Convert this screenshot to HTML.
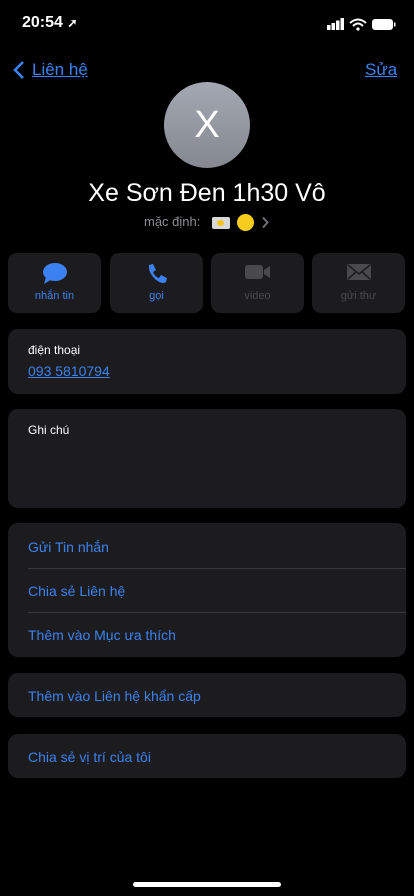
<!DOCTYPE html>
<html><head><meta charset="utf-8"><style>
*{margin:0;padding:0;box-sizing:border-box}
body{width:414px;height:896px;background:#000;color:#fff;font-family:"Liberation Sans",sans-serif;position:relative;overflow:hidden}
.a{position:absolute}
.card{position:absolute;left:8px;width:398px;background:#1c1c1e;border-radius:10px}
.blue{color:#3b82f0}
.btn{position:absolute;top:253px;width:93px;height:60px;background:#1c1c1e;border-radius:9px;text-align:center;font-size:11px}
.btn span{position:absolute;left:0;right:0;top:37px}
.btn svg{position:absolute;left:50%;transform:translateX(-50%);top:10px}
.row{position:absolute;left:20px;font-size:14px;color:#3b82f0}
.sep{position:absolute;left:20px;right:0;height:1px;background:#38383a}
</style></head><body>
<div class="a" style="left:22px;top:14px;font-size:16px;font-weight:bold">20:54 <span style="font-size:12px">➚</span></div>
<svg class="a" style="left:327px;top:18px" width="70" height="14">
<rect x="0" y="7" width="3.5" height="5" fill="#fff"/><rect x="4.5" y="5" width="3.5" height="7" fill="#fff"/><rect x="9" y="2.5" width="3.5" height="9.5" fill="#fff"/><rect x="13.5" y="0" width="3.5" height="12" fill="#fff"/>
<path d="M23 5 Q31 -2 39 5 M26 8 Q31 3 36 8" stroke="#fff" stroke-width="2" fill="none"/><circle cx="31" cy="11" r="1.6" fill="#fff"/>
<rect x="45" y="1" width="21" height="11" rx="3" fill="#fff"/><rect x="67" y="4.5" width="1.5" height="4" fill="#fff"/>
</svg>
<svg class="a" style="left:12px;top:60px" width="14" height="20"><path d="M11 2 L3 10 L11 18" stroke="#3b82f0" stroke-width="2.6" fill="none"/></svg>
<div class="a blue" style="left:32px;top:60px;font-size:17px;text-decoration:underline">Liên hệ</div>
<div class="a blue" style="left:365px;top:60px;font-size:17px;text-decoration:underline">Sửa</div>
<div class="a" style="left:164px;top:82px;width:86px;height:86px;border-radius:50%;background:linear-gradient(#a4a8b2,#858891);text-align:center;line-height:86px;font-size:38px">X</div>
<div class="a" style="left:0;width:414px;top:179px;text-align:center;font-size:25px">Xe Sơn Đen 1h30 Vô</div>
<div class="a" style="left:144px;top:214px;font-size:13px;color:#8e8e93">mặc định:</div>
<div class="a" style="left:212px;top:217px;width:18px;height:12px;background:#d8d8d8;border-radius:2px"><div style="margin:3px 5px;width:7px;height:6px;background:#f0c419;border-radius:50%"></div></div>
<div class="a" style="left:237px;top:214px;width:17px;height:17px;border-radius:50%;background:#f7cc1c"></div>
<svg class="a" style="left:261px;top:216px" width="8" height="13"><path d="M2 1.5 L6.5 6.5 L2 11.5" stroke="#6e6e73" stroke-width="2" fill="none"/></svg>

<div class="btn blue" style="left:8px"><svg width="26" height="22" viewBox="0 0 26 22"><ellipse cx="13" cy="9" rx="12" ry="9" fill="#3b82f0"/><path d="M4 14 L2 21 L10 16Z" fill="#3b82f0"/></svg><span>nhắn tin</span></div>
<div class="btn blue" style="left:110px"><svg width="22" height="22" viewBox="0 0 22 22"><path d="M3 2 L7 1 L10 7 L7 9 Q9 14 13 15 L15 12 L21 15 L20 19 Q16 22 9 16 Q2 9 3 2Z" fill="#3b82f0"/></svg><span>gọi</span></div>
<div class="btn" style="left:211px;color:#4a4a4e"><svg width="26" height="18" viewBox="0 0 26 18"><rect x="0" y="2" width="18" height="14" rx="3" fill="#4a4a4e"/><path d="M19 7 L25 3 L25 15 L19 11Z" fill="#4a4a4e"/></svg><span>video</span></div>
<div class="btn" style="left:312px;color:#4a4a4e"><svg width="24" height="18" viewBox="0 0 24 18"><rect x="0" y="1" width="24" height="16" rx="2" fill="#4a4a4e"/><path d="M1 2 L12 11 L23 2 M1 16 L9 9 M23 16 L15 9" stroke="#1c1c1e" stroke-width="1.5" fill="none"/></svg><span>gửi thư</span></div>

<div class="card" style="top:329px;height:65px">
<div class="a" style="left:20px;top:14px;font-size:12px">điện thoại</div>
<div class="a blue" style="left:20px;top:34px;font-size:14px;text-decoration:underline">093 5810794</div>
</div>
<div class="card" style="top:409px;height:99px"><div class="a" style="left:20px;top:14px;font-size:12px">Ghi chú</div></div>
<div class="card" style="top:523px;height:134px">
<div class="row" style="top:16px">Gửi Tin nhắn</div><div class="sep" style="top:45px"></div>
<div class="row" style="top:60px">Chia sẻ Liên hệ</div><div class="sep" style="top:89px"></div>
<div class="row" style="top:104px">Thêm vào Mục ưa thích</div>
</div>
<div class="card" style="top:673px;height:44px"><div class="row" style="top:15px">Thêm vào Liên hệ khẩn cấp</div></div>
<div class="card" style="top:734px;height:44px"><div class="row" style="top:15px">Chia sẻ vị trí của tôi</div></div>
<div class="a" style="left:133px;top:882px;width:148px;height:5px;border-radius:3px;background:#fff"></div>
</body></html>
